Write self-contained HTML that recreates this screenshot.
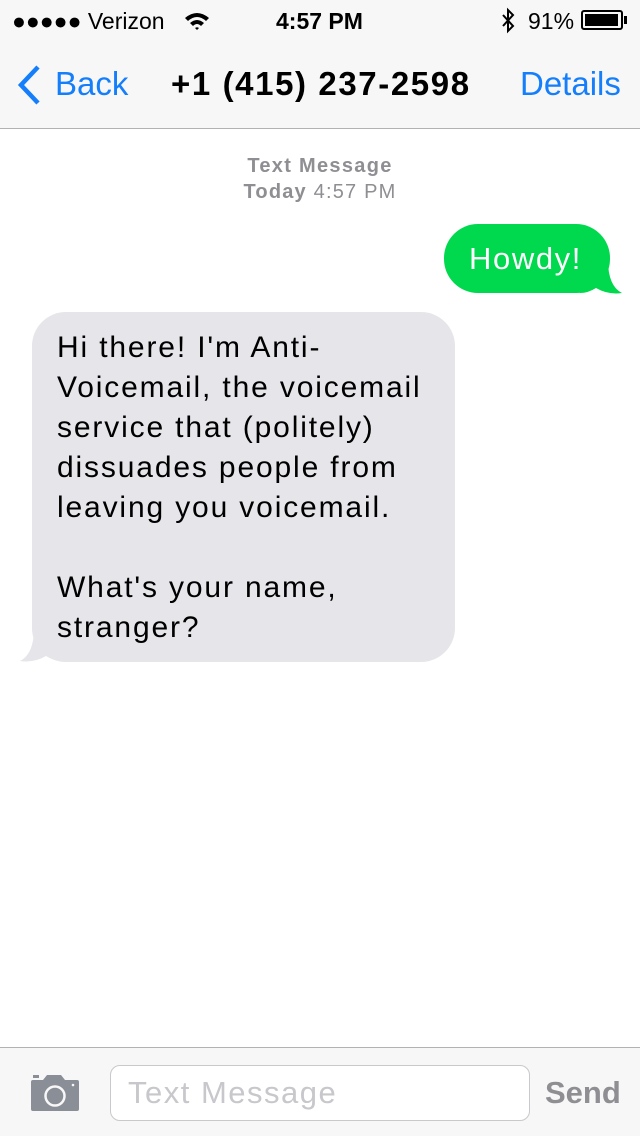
<!DOCTYPE html>
<html><head><meta charset="utf-8"><style>
*{margin:0;padding:0;box-sizing:border-box}
body{width:640px;height:1136px;background:#fff;font-family:"Liberation Sans",sans-serif;position:relative;overflow:hidden}
.hdr{position:absolute;left:0;top:0;width:640px;height:129px;background:#f7f7f7;border-bottom:1px solid #b2b2b2}
.abs{position:absolute;white-space:nowrap}
.blue{color:#147efb}
.bubble{position:absolute;border-radius:34px}
.foot{position:absolute;left:0;top:1047px;width:640px;height:89px;background:#f7f7f7;border-top:1px solid #b2b2b2}
</style></head><body>
<div class="hdr">
  <div class="abs" style="left:12px;top:8px;font-size:23px;color:#000">●●●●● Verizon</div>
  <svg class="abs" style="left:183px;top:11px" width="28" height="20" viewBox="0 0 28 20"><path d="M2 7 Q14 -3 26 7 L23 10 Q14 2 5 10Z M7 12 Q14 6 21 12 L18 15 Q14 11 10 15Z M12 17 L14 19 L16 17 Q14 15.5 12 17Z" fill="#000"/></svg>
  <div class="abs" style="left:276px;top:8px;font-size:23px;font-weight:bold">4:57 PM</div>
  <svg class="abs" style="left:500px;top:7px" width="16" height="28" viewBox="0 0 16 28"><path d="M3 8 L13 19 L8 24 L8 3 L13 8 L3 19" stroke="#000" stroke-width="2" fill="none"/></svg>
  <div class="abs" style="left:528px;top:8px;font-size:23px">91%</div>
  <div class="abs" style="left:581px;top:10px;width:42px;height:20px;border:2px solid #000;border-radius:3px;padding:2px"><div style="width:33px;height:12px;background:#000"></div></div>
  <div class="abs" style="left:624px;top:16px;width:3px;height:8px;background:#000"></div>
  <svg class="abs" style="left:16px;top:64px" width="28" height="42" viewBox="0 0 28 42"><path d="M22 3 L5 21 L22 39" stroke="#147efb" stroke-width="4.5" fill="none"/></svg>
  <div class="abs blue" style="left:55px;top:65px;font-size:33px">Back</div>
  <div class="abs" style="left:171px;top:65px;font-size:33px;font-weight:bold;letter-spacing:1.6px">+1 (415) 237-2598</div>
  <div class="abs blue" style="left:520px;top:65px;font-size:33px">Details</div>
</div>
<div class="abs" style="left:0;width:640px;text-align:center;top:155px;font-size:20px;color:#8e8e93;font-weight:bold;letter-spacing:1.3px">Text Message</div>
<div class="abs" style="left:0;width:640px;text-align:center;top:181px;font-size:20px;color:#8e8e93;letter-spacing:1.2px"><b>Today</b> 4:57 PM</div>
<svg class="abs" style="left:580px;top:260px" width="44" height="36" viewBox="0 0 44 36"><path d="M0 0 L28 0 Q28 26 42 33 Q28 35 16 28 Q8 33 0 33Z" fill="#00d84d"/></svg>
<div class="bubble" style="left:444px;top:224px;width:166px;height:69px;background:#00d84d"></div>
<div class="abs" style="left:469px;top:241px;font-size:31px;color:#fff;letter-spacing:1.6px">Howdy!</div>
<svg class="abs" style="left:18px;top:628px" width="44" height="36" viewBox="0 0 44 36"><path d="M44 0 L16 0 Q16 26 2 33 Q16 35 28 28 Q36 33 44 33Z" fill="#e5e5ea"/></svg>
<div class="bubble" style="left:32px;top:312px;width:423px;height:350px;background:#e5e5ea"></div>
<div class="abs" style="left:57px;top:328px;font-size:30px;line-height:40px;color:#000;letter-spacing:1.85px">Hi there! I'm Anti-<br>Voicemail, the voicemail<br>service that (politely)<br>dissuades people from<br>leaving you voicemail.<br><br>What's your name,<br>stranger?</div>
<div class="foot">
  <svg class="abs" style="left:29px;top:26px" width="52" height="38" viewBox="0 0 52 38"><path d="M2 8 Q2 6 4 6 L14 6 L18 1 L32 1 L36 6 L48 6 Q50 6 50 8 L50 35 Q50 37 48 37 L4 37 Q2 37 2 35Z" fill="#8a8e96"/><rect x="4" y="1" width="6" height="3" fill="#8a8e96"/><circle cx="26" cy="22" r="9.5" fill="none" stroke="#f7f7f7" stroke-width="2.5"/><circle cx="44" cy="11" r="1.3" fill="#f7f7f7"/></svg>
  <div class="abs" style="left:110px;top:17px;width:420px;height:56px;border:1px solid #c8c8cd;border-radius:10px;background:#fff"></div>
  <div class="abs" style="left:128px;top:27px;font-size:31px;color:#c7c7cc;letter-spacing:1.5px">Text Message</div>
  <div class="abs" style="left:545px;top:27px;font-size:31px;font-weight:bold;color:#8e8e93">Send</div>
</div>
</body></html>
